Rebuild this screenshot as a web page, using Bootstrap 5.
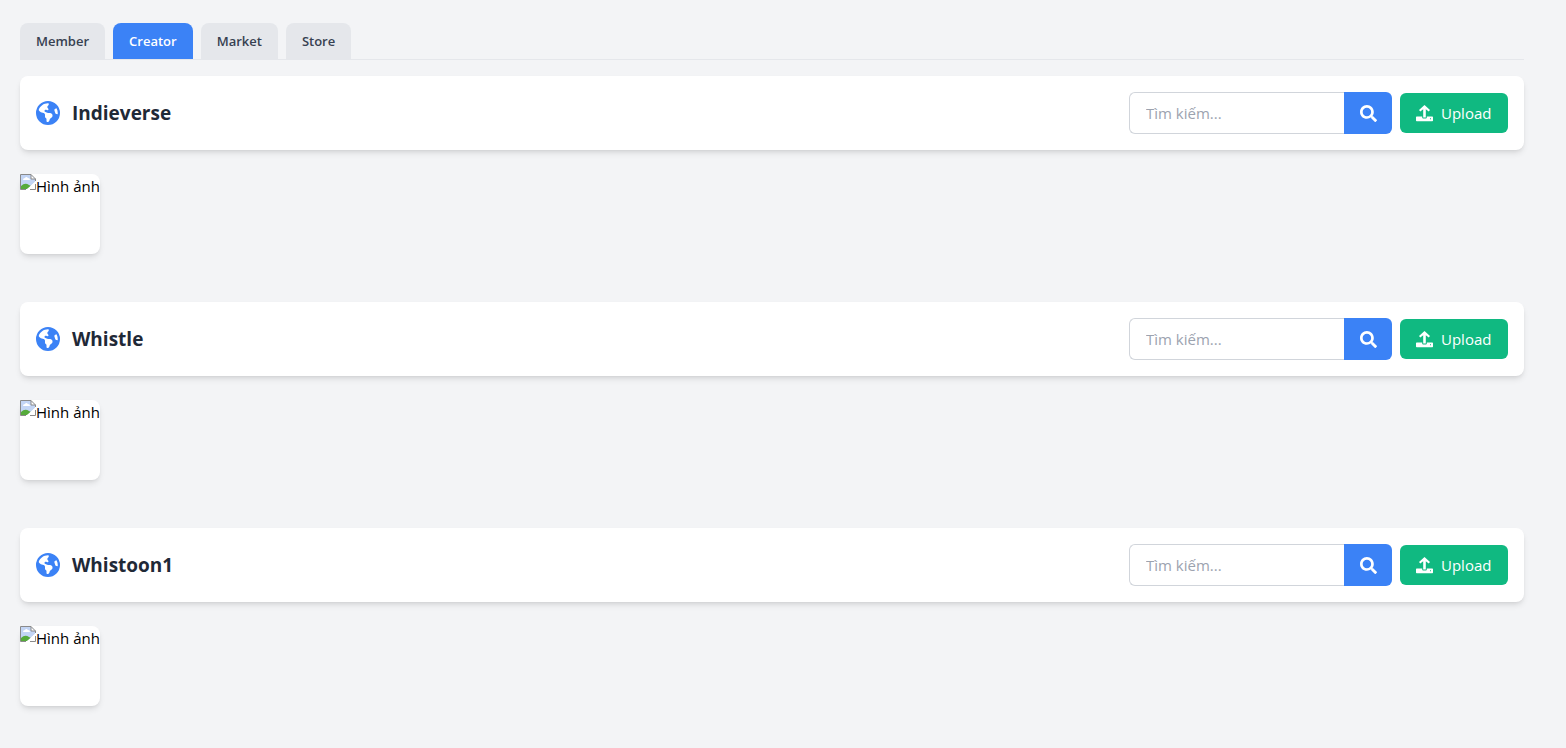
<!DOCTYPE html>
<html lang="vi">
<head>
<meta charset="utf-8">
<meta name="viewport" content="width=device-width, initial-scale=1">
<title>Creator</title>
<link rel="stylesheet" href="https://cdn.jsdelivr.net/npm/bootstrap@5.3.0/dist/css/bootstrap.min.css">
<style>
body{font-family:"Segoe UI","Open Sans","Noto Sans",sans-serif;font-size:15px;line-height:24px;background:#f3f4f6;color:#000}
.page{padding:23px 42px 40px 20px}
.tabs{border-bottom:1px solid #e5e7eb;margin-bottom:16px}
.tab{border:0;background:#e5e7eb;color:#374151;font-size:13px;font-weight:600;line-height:20px;padding:8px 16px;border-radius:8px 8px 0 0}
.tab.active{background:#3b82f6;color:#fff}
.panel{background:#fff;border-radius:8px;box-shadow:0 4px 6px -1px rgba(0,0,0,.1),0 2px 4px -2px rgba(0,0,0,.1)}
.panel h2{font-size:19px;line-height:28px;font-weight:700;color:#1f2937}
.globe{color:#3b82f6}
.search-box{width:215px;height:42px;border:1px solid #d1d5db;border-right:0;border-radius:6px 0 0 6px;padding:8px 16px;color:#000}
.search-box::placeholder{color:#9ca3af}
.search-btn{border:0;width:48px;background:#3b82f6;color:#fff;border-radius:0 6px 6px 0}
.upload-btn{border:0;min-width:108px;height:40px;padding:8px 16px;background:#10b981;color:#fff;border-radius:6px}
.thumb{width:80px;height:80px;background:#fff;border-radius:8px;box-shadow:0 4px 6px -1px rgba(0,0,0,.1),0 2px 4px -2px rgba(0,0,0,.1);white-space:nowrap;margin:24px 0 48px}
</style>
</head>
<body>
<svg class="d-none">
<symbol id="i-globe" viewBox="0 0 512 512"><path fill="currentColor" d="M57.7 193l9.4 16.4c8.3 14.5 21.9 25.2 38 29.8L163 255.7c17.2 4.9 29 20.6 29 38.5v39.9c0 11 6.2 21 16 25.9s16 14.9 16 25.9v39c0 15.6 14.9 26.9 29.9 22.6c16.1-4.6 28.6-17.5 32.7-33.8l2.8-11.2c4.2-16.9 15.2-31.4 30.3-40l8.1-4.6c15-8.5 24.2-24.5 24.2-41.7v-8.3c0-12.7-5.1-24.9-14.1-33.9l-3.9-3.9c-9-9-21.2-14.1-33.9-14.1H257c-11.1 0-22.1-2.9-31.8-8.4l-34.5-19.7c-4.3-2.5-7.6-6.5-9.2-11.2c-3.2-9.6 1.1-20 10.2-24.5l5.9-3c6.6-3.3 14.3-3.9 21.3-1.5l23.2 7.7c8.2 2.7 17.2-.4 21.9-7.5c4.7-7 4.2-16.3-1.2-22.8l-13.6-16.3c-10-12-9.9-29.5 .3-41.3l15.7-18.3c8.8-10.3 10.2-25 3.5-36.7l-2.4-4.2c-3.5-.2-6.9-.3-10.4-.3C163.1 48 84.4 108.9 57.7 193zM464 256c0-36.8-9.6-71.4-26.4-101.5L412 164.8c-15.7 6.3-23.8 23.8-18.5 39.8l16.9 50.7c3.5 10.4 12 18.3 22.6 20.9l29.1 7.3c1.2-9 1.8-18.2 1.8-27.5zM0 256a256 256 0 1 1 512 0A256 256 0 1 1 0 256z"/></symbol>
<symbol id="i-search" viewBox="0 0 512 512"><path fill="currentColor" d="M505 442.7L405.3 343c-4.5-4.5-10.6-7-17-7H372c27.6-35.3 44-79.7 44-128C416 93.1 322.9 0 208 0S0 93.1 0 208s93.1 208 208 208c48.3 0 92.7-16.4 128-44v16.3c0 6.4 2.5 12.5 7 17l99.7 99.7c9.4 9.4 24.6 9.4 33.9 0l28.3-28.3c9.4-9.4 9.4-24.6.1-34zM208 336c-70.7 0-128-57.2-128-128 0-70.7 57.2-128 128-128 70.7 0 128 57.2 128 128 0 70.7-57.2 128-128 128z"/></symbol>
<symbol id="i-upload" viewBox="0 0 17 17"><path fill="currentColor" fill-rule="evenodd" d="M8.5 0 14 5 12.7 6.5 9.8 4.2V12.6H7.2V4.2L4.3 6.5 3 5ZM.7 11.6H6.2V12.5Q6.2 13.5 7.2 13.5H9.8Q10.8 13.5 10.8 12.5V11.6H16.3Q17 11.6 17 12.3V15.6Q17 16.3 16.3 16.3H.7Q0 16.3 0 15.6V12.3Q0 11.6 .7 11.6ZM14 13.3V14.3H15V13.3Z"/></symbol>
<symbol id="i-broken" viewBox="0 0 16 16"><path fill="#c3d5f5" d="M1 1H11L15 5V8L7 15H1Z"/><path fill="#fff" d="M3 6Q3 4 5 4Q6 2 8 4Q10 4 10 6ZM11 1V5H15Z"/><path fill="#56ab3b" d="M1 15V12Q5 8 9 11L11 12 7 15Z"/><path fill="#fff" d="M6 16 16 7V9L9 16Z"/><path fill="none" stroke="#8a8a8a" d="M.5 15.5V.5H11L15.5 5V7M11 .5V5H15.5M.5 15.5H6M10 15.5H15.5V10"/></symbol>
</svg>
<main class="page">
<nav class="tabs d-flex gap-2" aria-label="Danh mục">
<button type="button" class="tab">Member</button><button type="button" class="tab active">Creator</button><button type="button" class="tab">Market</button><button type="button" class="tab">Store</button>
</nav>
<section>
<div class="panel d-flex align-items-center justify-content-between p-3">
<div class="d-flex align-items-center gap-2"><svg class="globe me-1" width="24" height="24"><use href="#i-globe"/></svg><h2 class="m-0">Indieverse</h2></div>
<form class="d-flex align-items-center gap-2"><div class="d-flex"><input class="search-box" type="text" placeholder="Tìm kiếm..." aria-label="Tìm kiếm Indieverse"><button type="button" class="search-btn d-flex align-items-center justify-content-center" aria-label="Tìm"><svg width="17" height="17"><use href="#i-search"/></svg></button></div><button type="button" class="upload-btn d-flex align-items-center gap-2"><svg width="17" height="17"><use href="#i-upload"/></svg>Upload</button></form>
</div>
<div class="thumb d-flex"><svg class="flex-shrink-0" width="16" height="16"><use href="#i-broken"/></svg><span>Hình ảnh</span></div>
</section>
<section>
<div class="panel d-flex align-items-center justify-content-between p-3">
<div class="d-flex align-items-center gap-2"><svg class="globe me-1" width="24" height="24"><use href="#i-globe"/></svg><h2 class="m-0">Whistle</h2></div>
<form class="d-flex align-items-center gap-2"><div class="d-flex"><input class="search-box" type="text" placeholder="Tìm kiếm..." aria-label="Tìm kiếm Whistle"><button type="button" class="search-btn d-flex align-items-center justify-content-center" aria-label="Tìm"><svg width="17" height="17"><use href="#i-search"/></svg></button></div><button type="button" class="upload-btn d-flex align-items-center gap-2"><svg width="17" height="17"><use href="#i-upload"/></svg>Upload</button></form>
</div>
<div class="thumb d-flex"><svg class="flex-shrink-0" width="16" height="16"><use href="#i-broken"/></svg><span>Hình ảnh</span></div>
</section>
<section>
<div class="panel d-flex align-items-center justify-content-between p-3">
<div class="d-flex align-items-center gap-2"><svg class="globe me-1" width="24" height="24"><use href="#i-globe"/></svg><h2 class="m-0">Whistoon1</h2></div>
<form class="d-flex align-items-center gap-2"><div class="d-flex"><input class="search-box" type="text" placeholder="Tìm kiếm..." aria-label="Tìm kiếm Whistoon1"><button type="button" class="search-btn d-flex align-items-center justify-content-center" aria-label="Tìm"><svg width="17" height="17"><use href="#i-search"/></svg></button></div><button type="button" class="upload-btn d-flex align-items-center gap-2"><svg width="17" height="17"><use href="#i-upload"/></svg>Upload</button></form>
</div>
<div class="thumb d-flex mb-0"><svg class="flex-shrink-0" width="16" height="16"><use href="#i-broken"/></svg><span>Hình ảnh</span></div>
</section>
</main>
<script src="https://cdn.jsdelivr.net/npm/bootstrap@5.3.0/dist/js/bootstrap.bundle.min.js"></script>
</body>
</html>
